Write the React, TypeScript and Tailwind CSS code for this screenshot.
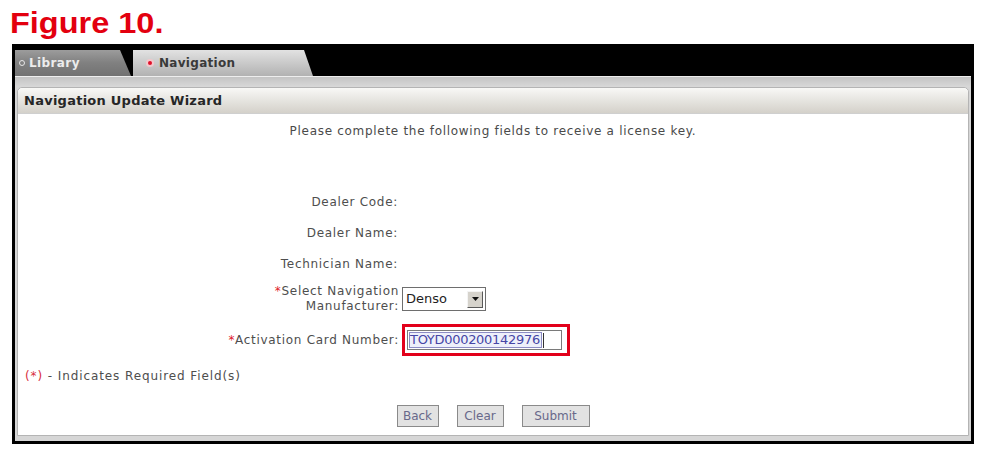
export default function App() {
  const labelFont = { fontFamily: '"DejaVu Sans", Verdana, sans-serif' };

  return (
    <div className="w-[983px] h-[453px] bg-white overflow-hidden" style={labelFont}>
      {/* Figure caption */}
      <div className="h-[44px] pt-[6px] pl-[10px]">
        <span
          className="inline-block origin-left scale-x-[1.12] text-[29px] leading-[34px] font-bold text-[#e3000f]"
          style={{ fontFamily: '"Liberation Sans", Arial, sans-serif' }}
        >
          Figure 10.
        </span>
      </div>

      {/* Window frame */}
      <div className="ml-[12px] w-[962px] h-[400px] border-[3px] border-black flex flex-col bg-[#d6d6d6]">
        {/* Tab bar */}
        <div className="h-[29px] bg-black flex items-end">
          <div className="w-[116px] h-[26px] bg-gradient-to-b from-[#9c9c9c] via-[#808080] to-[#727272] flex items-center pl-[4px] gap-[4px] [clip-path:polygon(0_0,105px_0,116px_100%,0_100%)]">
            <span className="w-[6px] h-[6px] rounded-full border border-[#e6e6e6]" />
            <span className="text-[12px] tracking-[0.4px] font-bold text-[#ececec]">Library</span>
          </div>
          <div className="ml-[2px] w-[180px] h-[26px] bg-gradient-to-b from-[#e2e2e2] to-[#b2b2b2] flex items-center pl-[13px] gap-[5px] [clip-path:polygon(0_0,171px_0,180px_100%,0_100%)]">
            <span className="w-[8px] h-[8px] rounded-full bg-[#f2c8cc] flex items-center justify-center">
              <span className="w-[4px] h-[4px] rounded-full bg-[#e0102a]" />
            </span>
            <span className="text-[12px] tracking-[0.3px] font-bold text-[#3a3a3a]">Navigation</span>
          </div>
        </div>

        {/* Band under tabs */}
        <div className="h-[11px] border-t border-[#eeeeee] bg-gradient-to-b from-[#c4c4c4] to-[#d8d8d8]" />

        {/* Panel */}
        <div className="flex-1 px-[2px] pb-[5px] flex flex-col">
          <div className="flex-1 rounded-t-[5px] border border-[#b4b4b4] bg-white flex flex-col">
            <div className="h-[26px] rounded-t-[5px] bg-gradient-to-b from-[#f8f8f6] to-[#d4d1ca] flex items-center pl-[6px] border-b border-[#cfcfcf]">
              <span className="text-[13px] tracking-[0.25px] font-bold text-[#262626]">Navigation Update Wizard</span>
            </div>

            <p className="pt-[10px] text-[12px] tracking-[0.7px] leading-[14px] text-center text-[#4a4a4a]">
              Please complete the following fields to receive a license key.
            </p>

            {/* Form rows */}
            <div className="mt-[48px] flex flex-col text-[12px] tracking-[0.7px] text-[#4e4e4e]">
              <div className="h-[31px] flex items-center">
                <div className="w-[380px] text-right">Dealer Code:</div>
              </div>
              <div className="h-[31px] flex items-center">
                <div className="w-[380px] text-right">Dealer Name:</div>
              </div>
              <div className="h-[31px] flex items-center">
                <div className="w-[380px] text-right">Technician Name:</div>
              </div>
              <div className="h-[40px] flex items-center gap-[3px]">
                <div className="w-[381px] text-right leading-[15px]">
                  <span className="text-[#e0202a]">*</span>Select Navigation
                  <br />
                  Manufacturer:
                </div>
                <div className="w-[84px] h-[24px] border border-[#6e6e6e] bg-white flex items-center justify-between pl-[3px] pr-[2px] tracking-normal">
                  <span className="text-[13px] text-[#1e1e1e]">Denso</span>
                  <span className="w-[16px] h-[17px] bg-[#d6d3cc] border border-t-[#f4f4f4] border-l-[#f4f4f4] border-r-[#5a5a5a] border-b-[#5a5a5a] flex items-center justify-center">
                    <svg width="7" height="4" viewBox="0 0 7 4">
                      <path d="M0 0h7L3.5 4z" fill="#111" />
                    </svg>
                  </span>
                </div>
              </div>
              <div className="h-[42px] flex items-center gap-[3px]">
                <div className="w-[381px] text-right">
                  <span className="text-[#e0202a]">*</span>Activation Card Number:
                </div>
                <div className="w-[168px] h-[32px] border-[3px] border-[#e2001a] pt-[3px] pl-[2px] pr-[5px] pb-[3px] tracking-normal">
                  <div className="h-[20px] border border-[#7a7a7a] bg-white flex items-center pl-[1px]">
                    <span className="h-[16px] flex items-center border border-[#8c8cc4] bg-[#eef0fa] pr-[1px] text-[13px] text-[#4646a6] tracking-[-0.3px]">
                      TOYD000200142976
                    </span>
                    <span className="ml-[1px] w-[1px] h-[15px] bg-[#333]" />
                  </div>
                </div>
              </div>
            </div>

            <div className="mt-[8px] pl-[7px] text-[12px] tracking-[0.9px] leading-[14px] text-[#4e4e4e]">
              <span className="text-[#d83040]">(*)</span> - Indicates Required Field(s)
            </div>

            <div className="mt-[22px] flex justify-center gap-[18px]">
              <button className="w-[42px] h-[22px] bg-[#e2e2e2] border border-[#8a8a8a] text-[12px] text-[#68688a]">
                Back
              </button>
              <button className="w-[47px] h-[22px] bg-[#e2e2e2] border border-[#8a8a8a] text-[12px] text-[#68688a]">
                Clear
              </button>
              <button className="w-[68px] h-[22px] bg-[#e2e2e2] border border-[#8a8a8a] text-[12px] text-[#68688a]">
                Submit
              </button>
            </div>
          </div>
        </div>
      </div>
    </div>
  );
}
